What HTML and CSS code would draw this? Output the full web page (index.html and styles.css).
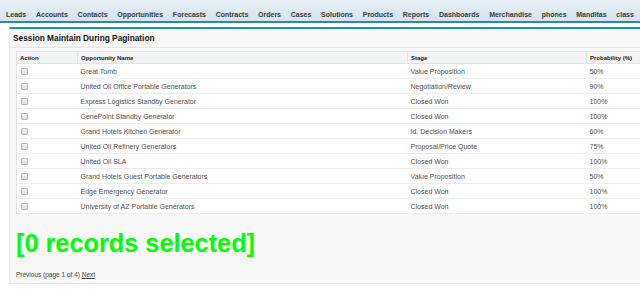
FILE: index.html
```html
<!DOCTYPE html>
<html lang="en">
<head>
  <meta charset="UTF-8" />
  <title>Session Maintain During Pagination</title>
  <link rel="stylesheet" href="styles.css">
</head>
<body>
  <!-- Tab bar -->
  <nav class="tab-bar">
    <a href="#">Leads</a>
    <a href="#">Accounts</a>
    <a href="#">Contacts</a>
    <a href="#">Opportunities</a>
    <a href="#">Forecasts</a>
    <a href="#">Contracts</a>
    <a href="#">Orders</a>
    <a href="#">Cases</a>
    <a href="#">Solutions</a>
    <a href="#">Products</a>
    <a href="#">Reports</a>
    <a href="#">Dashboards</a>
    <a href="#">Merchandise</a>
    <a href="#">phones</a>
    <a href="#">Manditas</a>
    <a href="#">class</a>
  </nav>

  <!-- Page block -->
  <section class="page-block">
    <h2 class="block-title">Session Maintain During Pagination</h2>
    <table class="list">
      <thead>
        <tr>
          <th class="col-action">Action</th>
          <th class="col-name">Opportunity Name</th>
          <th class="col-stage">Stage</th>
          <th>Probability (%)</th>
        </tr>
      </thead>
      <tbody>
        <tr><td><input type="checkbox"></td><td>Great Tomb</td><td>Value Proposition</td><td>50%</td></tr>
        <tr><td><input type="checkbox"></td><td>United Oil Office Portable Generators</td><td>Negotiation/Review</td><td>90%</td></tr>
        <tr><td><input type="checkbox"></td><td>Express Logistics Standby Generator</td><td>Closed Won</td><td>100%</td></tr>
        <tr><td><input type="checkbox"></td><td>GenePoint Standby Generator</td><td>Closed Won</td><td>100%</td></tr>
        <tr><td><input type="checkbox"></td><td>Grand Hotels Kitchen Generator</td><td>Id. Decision Makers</td><td>60%</td></tr>
        <tr><td><input type="checkbox"></td><td>United Oil Refinery Generators</td><td>Proposal/Price Quote</td><td>75%</td></tr>
        <tr><td><input type="checkbox"></td><td>United Oil SLA</td><td>Closed Won</td><td>100%</td></tr>
        <tr><td><input type="checkbox"></td><td>Grand Hotels Guest Portable Generators</td><td>Value Proposition</td><td>50%</td></tr>
        <tr><td><input type="checkbox"></td><td>Edge Emergency Generator</td><td>Closed Won</td><td>100%</td></tr>
        <tr><td><input type="checkbox"></td><td>University of AZ Portable Generators</td><td>Closed Won</td><td>100%</td></tr>
      </tbody>
    </table>

    <p class="selected-count">[0 records selected]</p>

    <p class="pager">Previous (page 1 of 4) <a href="#">Next</a></p>
  </section>
</body>
</html>
```

FILE: styles.css
```css
:root {
  --tab-blue: #2a86b4;
  --block-blue: #1f8fbf;
  --line: #e0e3e5;
  --row-line: #ececec;
  --text: #505050;
}

* {
  margin: 0;
  padding: 0;
  box-sizing: border-box;
}
body {
  font-family: "Liberation Sans", Arial, sans-serif;
  color: #222;
  background: #fff;
  overflow: hidden;
}
a {
  color: inherit;
  text-decoration: none;
}

/* Tab bar */
.tab-bar {
  display: flex;
  justify-content: space-between;
  align-items: center;
  height: 23px;
  padding: 7px 6px 0;
  background: linear-gradient(#e9f1f6, #d3e3ed);
  border-bottom: 2px solid var(--tab-blue);
}
.tab-bar a {
  font-size: 7px;
  font-weight: bold;
  color: #3a3a3a;
}

/* Page block */
.page-block {
  width: 631px;
  height: 257px;
  margin: 4px 0 0 9px;
  padding-left: 6px;
  background: #f8f8f8;
  border-top: 2px solid var(--block-blue);
  border-left: 1px solid #eaeaea;
  border-bottom: 1px solid #e3e3e3;
}
.block-title {
  height: 19px;
  line-height: 19px;
  margin-left: -6px;
  padding-left: 3px;
  font-size: 8.3px;
  font-weight: bold;
  color: #111;
  border-bottom: 1px solid #e6e6e6;
}

/* List table */
.list {
  width: 100%;
  margin-top: 3px;
  border-collapse: collapse;
  background: #fff;
  border: 1px solid var(--line);
  border-right: none;
}
.list th {
  height: 12px;
  padding: 0 3px;
  text-align: left;
  font-size: 6px;
  font-weight: bold;
  color: #222;
  background: #f2f3f3;
  border-bottom: 1px solid var(--line);
  border-left: 1px solid var(--line);
}
.list th:first-child {
  border-left: none;
}
.list .col-action { width: 61px; }
.list .col-name { width: 330px; }
.list .col-stage { width: 179px; }
.list td {
  height: 15px;
  padding: 0 3px;
  font-size: 7px;
  color: var(--text);
  border-bottom: 1px solid var(--row-line);
}
.list input[type="checkbox"] {
  appearance: none;
  display: block;
  width: 7px;
  height: 7px;
  margin-left: 1px;
  border: 1px solid #b8b8b8;
  border-radius: 1px;
  background: linear-gradient(#f2f2f2, #dedede);
}

.selected-count {
  margin-top: 15px;
  font-size: 25.3px;
  font-weight: bold;
  color: #00ff00;
}
.pager {
  margin-top: 13px;
  font-size: 6.5px;
  color: #444;
}
.pager a {
  text-decoration: underline;
}
```
